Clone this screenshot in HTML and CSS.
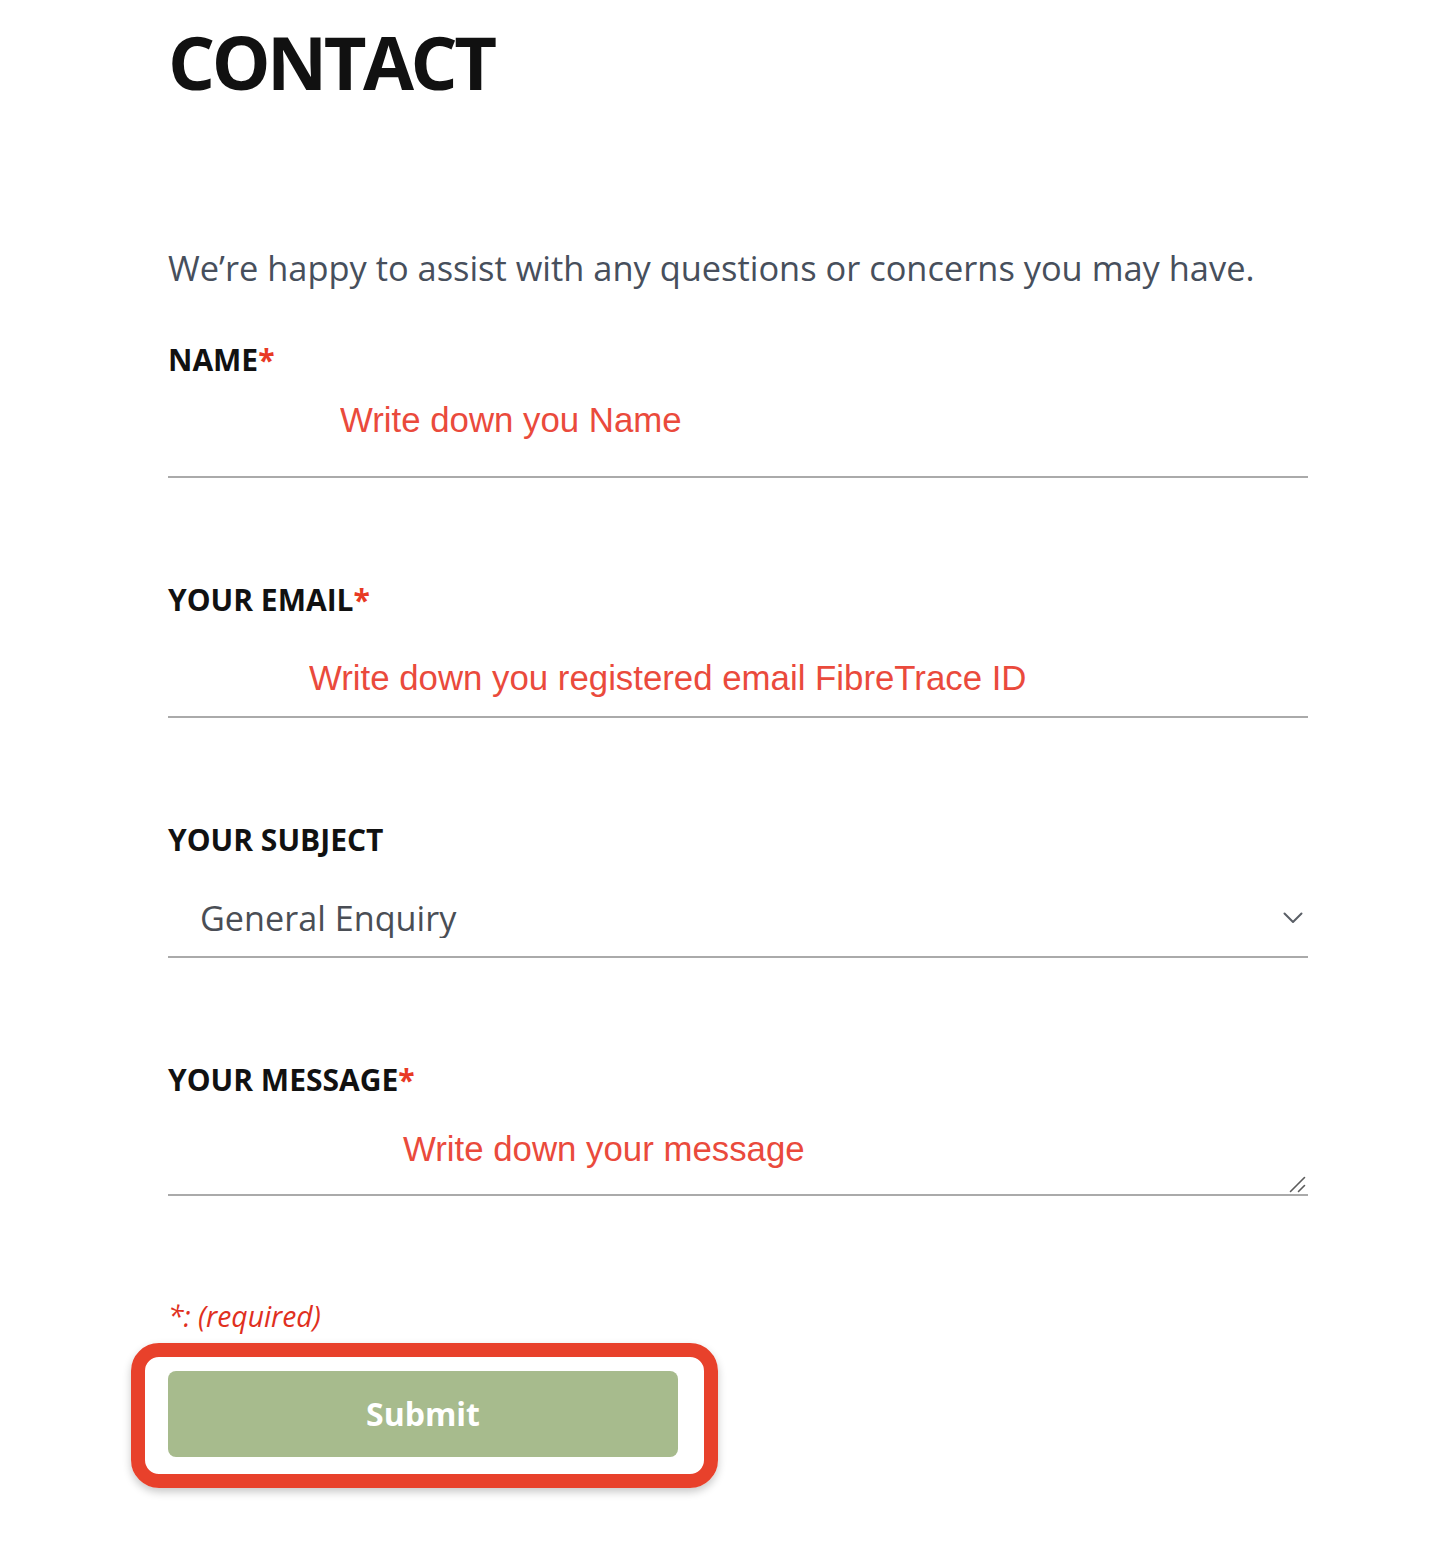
FILE: index.html
```html
<!DOCTYPE html>
<html lang="en">
<head>
<meta charset="utf-8">
<title>Contact</title>
<link rel="stylesheet" href="styles.css">
</head>
<body>
<main class="contact">
  <h1 class="contact-title">CONTACT</h1>
  <p class="contact-intro">We’re happy to assist with any questions or concerns you may have.</p>

  <form class="contact-form">
    <div class="field">
      <label class="field-label" for="name">NAME<span class="req">*</span></label>
      <input class="field-input field-input--name" id="name" type="text" placeholder="Write down you Name">
    </div>

    <div class="field">
      <label class="field-label" for="email">YOUR EMAIL<span class="req">*</span></label>
      <input class="field-input field-input--email" id="email" type="email" placeholder="Write down you registered email FibreTrace ID">
    </div>

    <div class="field">
      <label class="field-label" for="subject">YOUR SUBJECT</label>
      <div class="control-wrap">
        <select class="field-select" id="subject">
          <option>General Enquiry</option>
        </select>
        <svg class="select-chevron" width="20" height="12" viewBox="0 0 20 12" aria-hidden="true">
          <path d="M1.5 1.5 L10 10 L18.5 1.5" fill="none" stroke="#5a5f66" stroke-width="2" stroke-linecap="round" stroke-linejoin="round"/>
        </svg>
      </div>
    </div>

    <div class="field">
      <label class="field-label" for="message">YOUR MESSAGE<span class="req">*</span></label>
      <div class="control-wrap">
        <textarea class="field-textarea" id="message" placeholder="Write down your message"></textarea>
        <svg class="resize-grip" width="18" height="18" viewBox="0 0 18 18" aria-hidden="true">
          <path d="M2.5 16.5 L16.5 2.5 M10.5 16.5 L16.5 10.5" fill="none" stroke="#5c5c5c" stroke-width="1.6" stroke-linecap="round"/>
        </svg>
      </div>
    </div>

    <p class="required-note">*: (required)</p>

    <div class="submit-wrap">
      <button class="submit-btn" type="button">Submit</button>
    </div>
  </form>
</main>
</body>
</html>
```

FILE: styles.css
```css
html, body {
  margin: 0;
  padding: 0;
  background: #ffffff;
}

body {
  font-family: "Open Sans", "Noto Sans", sans-serif;
  color: #111111;
}

.contact {
  width: 1140px;
  margin-left: 168px;
  padding-bottom: 85px;
}

.contact-title {
  margin: 18px 0 0;
  font-size: 74px;
  line-height: 1.2;
  font-weight: 700;
  letter-spacing: -3.5px;
  color: #111111;
}

.contact-intro {
  margin: 137px 0 0;
  font-size: 34.4px;
  line-height: 48px;
  color: #474f5c;
}

.contact-form {
  margin-top: 48px;
  display: flex;
  flex-direction: column;
}

.field {
  display: flex;
  flex-direction: column;
  margin-bottom: 102px;
}

.field-label {
  font-size: 30px;
  line-height: 40px;
  font-weight: 700;
  color: #111111;
  height: 40px;
}

.req {
  color: #e83a24;
}

.field-input,
.field-textarea,
.field-select {
  display: block;
  width: 100%;
  box-sizing: border-box;
  margin: 0;
  border: 0;
  border-bottom: 2px solid #aaaaaa;
  border-radius: 0;
  background: transparent;
  outline: none;
  font-family: "Liberation Sans", Arial, sans-serif;
  font-size: 34.8px;
  line-height: 40px;
  color: #333333;
}

.field-input::placeholder,
.field-textarea::placeholder {
  color: #ea4a3c;
  opacity: 1;
}

.field-input--name {
  height: 98px;
  padding: 20px 0 36px 172px;
}

.field-input--email {
  height: 98px;
  padding: 38px 0 18px 141px;
}

.control-wrap {
  position: relative;
}

.field-select {
  -webkit-appearance: none;
  appearance: none;
  height: 98px;
  padding: 38px 0 18px 32px;
  font-family: "Open Sans", "Noto Sans", sans-serif;
  font-size: 34.2px;
  color: #4a4e55;
}

.select-chevron {
  position: absolute;
  right: 5px;
  top: 52px;
  pointer-events: none;
}

.field-textarea {
  height: 96px;
  padding: 29px 0 25px 235px;
  resize: none;
  overflow: hidden;
}

.resize-grip {
  position: absolute;
  right: 2px;
  bottom: 3px;
  pointer-events: none;
}

.required-note {
  margin: 0;
  font-size: 28.3px;
  line-height: 36px;
  font-style: italic;
  color: #e0301e;
}

.submit-wrap {
  position: relative;
  align-self: flex-start;
  margin-top: 37px;
}

/* highlight ring drawn around the submit button */
.submit-wrap::after {
  content: "";
  position: absolute;
  top: -28px;
  left: -37px;
  right: -40px;
  bottom: -31px;
  border: 14px solid #e8412b;
  border-radius: 28px;
  box-shadow: 0 4px 8px rgba(0, 0, 0, 0.22);
  pointer-events: none;
}

.submit-btn {
  display: block;
  width: 510px;
  height: 86px;
  border: 0;
  border-radius: 8px;
  background: #a7bb8d;
  color: #ffffff;
  font-family: "Open Sans", "Noto Sans", sans-serif;
  font-size: 32px;
  font-weight: 700;
  cursor: pointer;
}
```
